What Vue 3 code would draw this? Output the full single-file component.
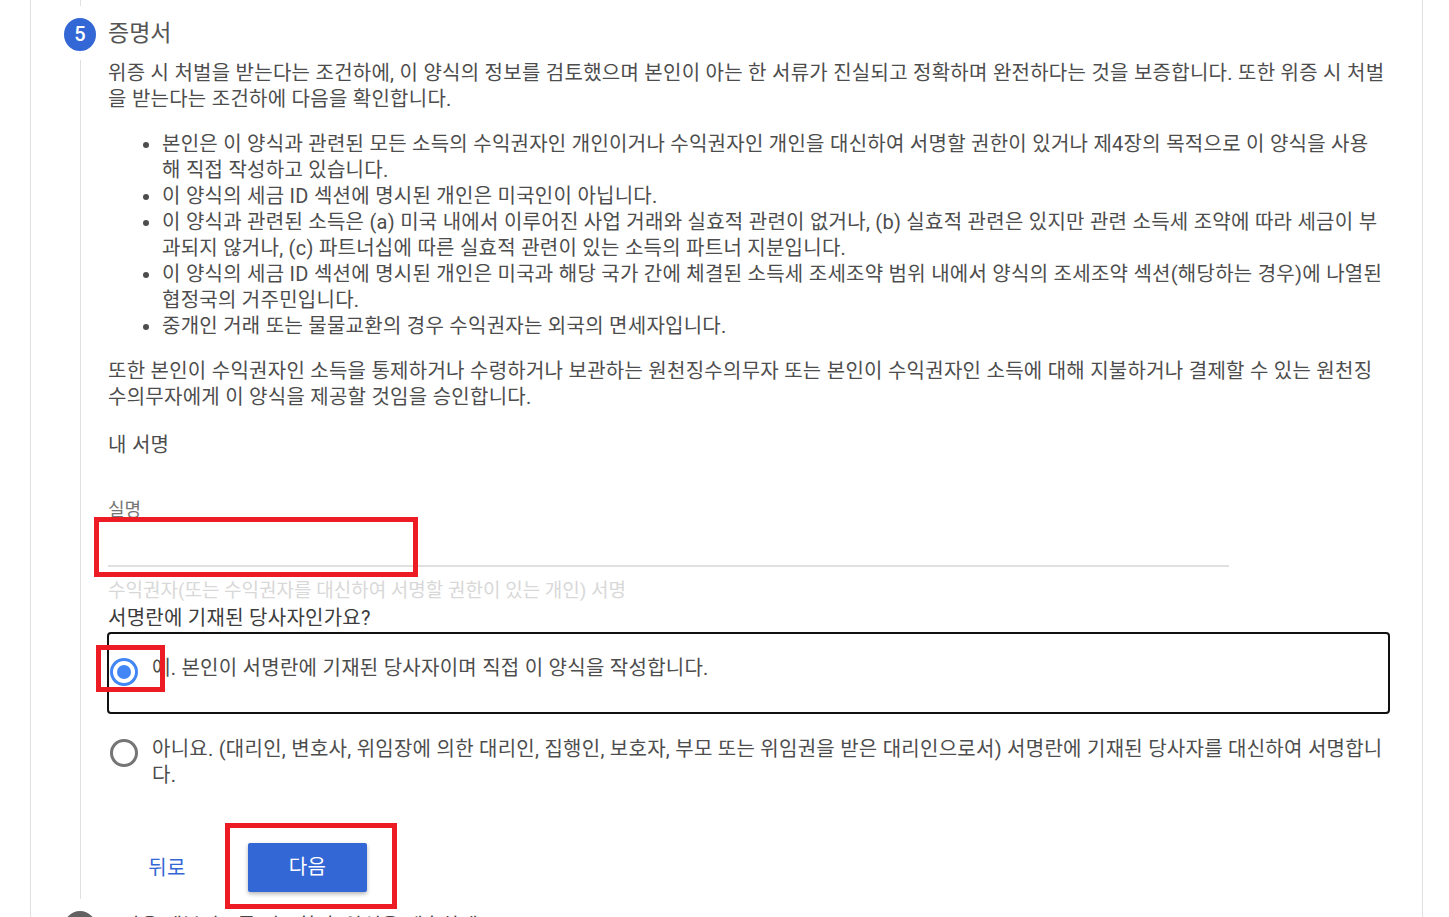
<script setup>
const bullets = [
  '본인은 이 양식과 관련된 모든 소득의 수익권자인 개인이거나 수익권자인 개인을 대신하여 서명할 권한이 있거나 제4장의 목적으로 이 양식을 사용\n해 직접 작성하고 있습니다.',
  '이 양식의 세금 ID 섹션에 명시된 개인은 미국인이 아닙니다.',
  '이 양식과 관련된 소득은 (a) 미국 내에서 이루어진 사업 거래와 실효적 관련이 없거나, (b) 실효적 관련은 있지만 관련 소득세 조약에 따라 세금이 부과되지 않거나, (c) 파트너십에 따른 실효적 관련이 있는 소득의 파트너 지분입니다.',
  '이 양식의 세금 ID 섹션에 명시된 개인은 미국과 해당 국가 간에 체결된 소득세 조세조약 범위 내에서 양식의 조세조약 섹션(해당하는 경우)에 나열된 협정국의 거주민입니다.',
  '중개인 거래 또는 물물교환의 경우 수익권자는 외국의 면세자입니다.'
]
</script>

<template>
  <div class="page">
    <div class="card">
      <div class="stem stem-top"></div>
      <div class="step-head">
        <span class="badge">5</span>
        <span class="step-title">증명서</span>
      </div>
      <div class="step-body">
        <p class="para para-first">위증 시 처벌을 받는다는 조건하에, 이 양식의 정보를 검토했으며 본인이 아는 한 서류가 진실되고 정확하며 완전하다는 것을 보증합니다. 또한 위증 시 처벌을 받는다는 조건하에 다음을 확인합니다.</p>
        <ul class="list">
          <li v-for="item in bullets" :key="item">{{ item }}</li>
        </ul>
        <p class="para">또한 본인이 수익권자인 소득을 통제하거나 수령하거나 보관하는 원천징수의무자 또는 본인이 수익권자인 소득에 대해 지불하거나 결제할 수 있는 원천징수의무자에게 이 양식을 제공할 것임을 승인합니다.</p>
        <div class="sign-title">내 서명</div>
        <div class="field">
          <div class="field-label">실명</div>
          <div class="field-line"></div>
          <div class="field-hint">수익권자(또는 수익권자를 대신하여 서명할 권한이 있는 개인) 서명</div>
          <div class="mark mark-name"></div>
        </div>
        <div class="question">서명란에 기재된 당사자인가요?</div>
        <div class="option option-on">
          <span class="radio radio-on"><span class="dot"></span></span>
          <span class="option-text">예. 본인이 서명란에 기재된 당사자이며 직접 이 양식을 작성합니다.</span>
          <div class="mark mark-radio"></div>
        </div>
        <div class="option option-off">
          <span class="radio"></span>
          <span class="option-text">아니요. (대리인, 변호사, 위임장에 의한 대리인, 집행인, 보호자, 부모 또는 위임권을 받은 대리인으로서) 서명란에 기재된 당사자를 대신하여 서명합니다.</span>
        </div>
        <div class="actions">
          <button class="btn-back">뒤로</button>
          <div class="next-wrap">
            <button class="btn-next">다음</button>
            <div class="mark mark-next"></div>
          </div>
        </div>
      </div>
      <div class="next-step">
        <span class="badge badge-grey">6</span>
        <span class="next-title">다음 세부정보를 검토한 후 양식을 제출하세요</span>
      </div>
    </div>
  </div>
</template>

<style scoped>
.page {
  width: 1449px;
  height: 917px;
  overflow: hidden;
  background: #fff;
  font-family: Roboto, "Noto Sans CJK KR", sans-serif;
  color: #4d4d4d;
}
.card {
  position: relative;
  box-sizing: border-box;
  width: 1393px;
  height: 917px;
  margin-left: 30px;
  border-left: 1px solid #e0e0e0;
  border-right: 1px solid #e0e0e0;
  padding: 0 32px 0 33px;
}
.stem {
  width: 1px;
  background: #e0e0e0;
  margin-left: 16px;
}
.stem-top {
  height: 6px;
}
.step-head {
  display: flex;
  align-items: center;
  height: 33px;
  margin-top: 12px;
}
.badge {
  flex: none;
  width: 32px;
  height: 33px;
  border-radius: 50%;
  background: #3367d6;
  color: #fff;
  font-size: 20px;
  font-weight: 500;
  line-height: 33px;
  text-align: center;
}
.badge-grey {
  background: #616161;
}
.step-title {
  margin-left: 12px;
  padding-bottom: 7px;
  font-size: 23px;
  color: #555;
}
.step-body {
  margin-left: 16px;
  height: 839px;
  margin-top: 10px;
  padding-left: 27px;
  border-left: 1px solid #e0e0e0;
  box-sizing: border-box;
  font-size: 20px;
  letter-spacing: 0.26px;
  line-height: 26px;
}
.para {
  margin: 0;
}
.para-first {
  margin-top: -1px;
}
.list {
  margin: 19px 0;
  padding-left: 54px;
  white-space: pre-line;
}
.sign-title {
  margin-top: 22px;
}
.field {
  position: relative;
  margin-top: 42px;
  width: 1121px;
}
.field-label {
  font-size: 18px;
  letter-spacing: 0;
  line-height: 20px;
  color: #757575;
}
.field-line {
  height: 2px;
  margin-top: 45px;
  background: #e0e0e0;
}
.field-hint {
  margin-top: 12px;
  font-size: 19px;
  letter-spacing: 0;
  color: #d8d8d8;
  line-height: 24px;
}
.question {
  margin-top: 2px;
  margin-bottom: 1px;
  line-height: 26px;
  color: #3c3c3c;
}
.option {
  position: relative;
  display: flex;
  box-sizing: border-box;
  width: 1283px;
  margin-left: -1px;
}
.option-on {
  height: 82px;
  padding: 21px 0 0 1px;
  border: 2px solid #111;
  border-radius: 4px;
}
.option-off {
  margin-top: 20px;
  padding: 0 0 0 1px;
  border: 2px solid transparent;
}
.option-text {
  margin-left: 14px;
  flex: 1;
}
.radio {
  flex: none;
  box-sizing: border-box;
  width: 28px;
  height: 28px;
  margin-top: 3px;
  border: 3px solid #757575;
  border-radius: 50%;
  display: flex;
  align-items: center;
  justify-content: center;
}
.radio-on {
  border-color: #4285f4;
}
.dot {
  width: 14px;
  height: 14px;
  border-radius: 50%;
  background: #4285f4;
}
.actions {
  display: flex;
  align-items: center;
  margin-top: 53px;
}
.btn-back {
  width: 40px;
  margin-left: 39px;
  padding: 0;
  border: none;
  background: none;
  font: inherit;
  letter-spacing: inherit;
  color: #3367d6;
}
.next-wrap {
  position: relative;
  margin-left: 61px;
}
.btn-next {
  display: block;
  width: 119px;
  height: 49px;
  padding: 0 0 2px;
  border: none;
  border-radius: 2px;
  background: #3367d6;
  color: #fff;
  font: inherit;
  letter-spacing: inherit;
  box-shadow: 0 2px 4px rgba(0, 0, 0, 0.3);
}
.mark {
  position: absolute;
  box-sizing: border-box;
  border: 5px solid #ed1c24;
}
.mark-name {
  left: -14px;
  top: 17px;
  width: 324px;
  height: 60px;
}
.mark-radio {
  left: -13px;
  top: 11px;
  width: 69px;
  height: 47px;
}
.mark-next {
  left: -23px;
  top: -20px;
  width: 172px;
  height: 86px;
}
.next-step {
  position: absolute;
  left: 33px;
  top: 911px;
  display: flex;
  align-items: center;
}
.next-title {
  margin-left: 26px;
  margin-top: -6px;
  font-size: 20px;
  color: #444;
}
</style>
